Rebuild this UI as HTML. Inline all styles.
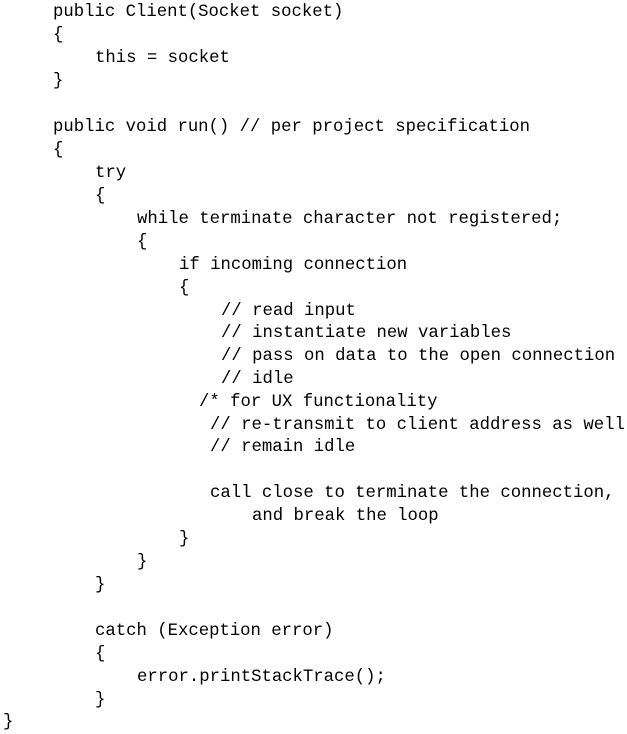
<!DOCTYPE html>
<html><head><meta charset="utf-8"><style>
html,body{margin:0;padding:0;background:#fff;}
body{width:627px;height:734px;position:relative;overflow:hidden;font-family:"Liberation Mono",monospace;font-size:17.3px;color:#000;}
div{position:absolute;white-space:pre;line-height:23px;height:23px;}
</style></head><body>
<div style="left:53px;top:1px">public Client(Socket socket)</div>
<div style="left:53px;top:24px">{</div>
<div style="left:95px;top:47px">this = socket</div>
<div style="left:53px;top:70px">}</div>
<div style="left:53px;top:116px">public void run() // per project specification</div>
<div style="left:53px;top:139px">{</div>
<div style="left:95px;top:162px">try</div>
<div style="left:95px;top:185px">{</div>
<div style="left:137px;top:208px">while terminate character not registered;</div>
<div style="left:137px;top:231px">{</div>
<div style="left:179px;top:254px">if incoming connection</div>
<div style="left:179px;top:277px">{</div>
<div style="left:221px;top:300px">// read input</div>
<div style="left:221px;top:322px">// instantiate new variables</div>
<div style="left:221px;top:345px">// pass on data to the open connection</div>
<div style="left:221px;top:368px">// idle</div>
<div style="left:199px;top:391px">/* for UX functionality</div>
<div style="left:210px;top:414px">// re-transmit to client address as well</div>
<div style="left:210px;top:436px">// remain idle</div>
<div style="left:210px;top:482px">call close to terminate the connection,</div>
<div style="left:252px;top:505px">and break the loop</div>
<div style="left:179px;top:528px">}</div>
<div style="left:137px;top:551px">}</div>
<div style="left:95px;top:574px">}</div>
<div style="left:95px;top:620px">catch (Exception error)</div>
<div style="left:95px;top:643px">{</div>
<div style="left:137px;top:666px">error.printStackTrace();</div>
<div style="left:95px;top:689px">}</div>
<div style="left:3px;top:711px">}</div>
</body></html>
